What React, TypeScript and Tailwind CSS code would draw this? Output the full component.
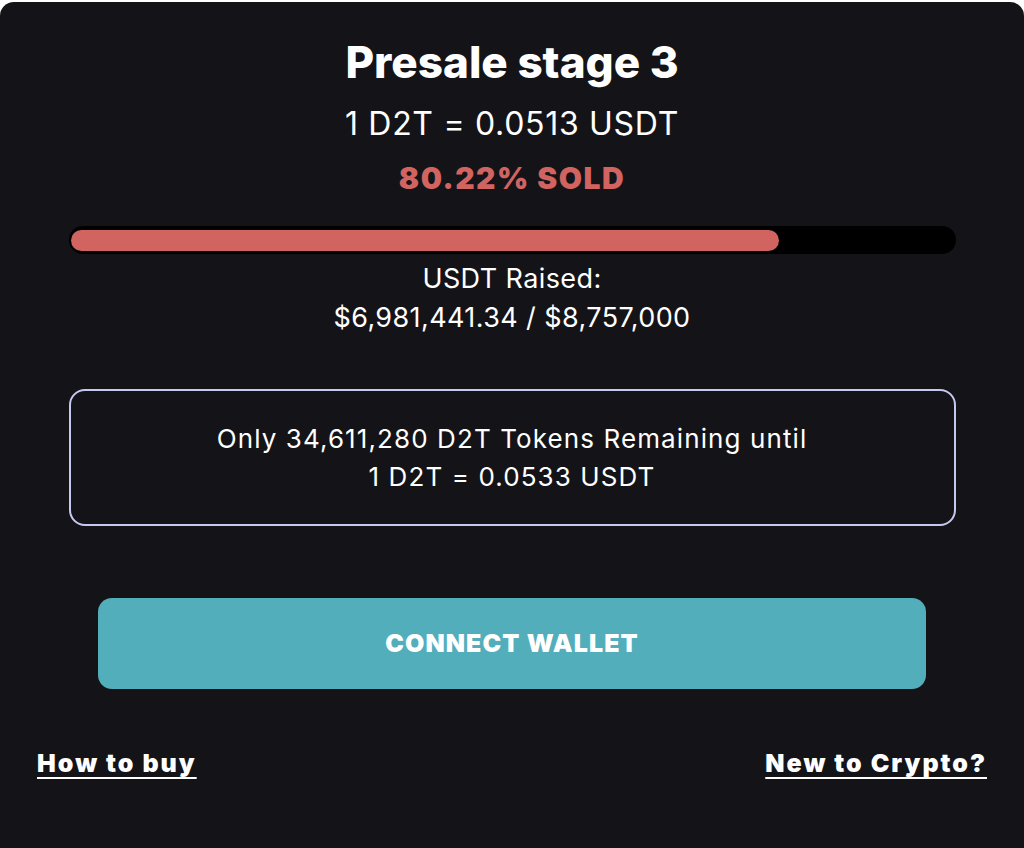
export default function App() {
  return (
    <div className="min-h-[848px] w-[1024px] bg-white pt-[2px]" style={{ fontFamily: "Inter, 'Open Sans', sans-serif" }}>
      <div className="flex min-h-[846px] flex-col items-center rounded-t-[14px] bg-[#141418] text-white">
        <h1 className="mt-[34px] text-[44px] font-extrabold leading-[52px]">Presale stage 3</h1>
        <div className="mt-[18px] text-[32px] leading-[36px] tracking-[0.7px]">1 D2T = 0.0513 USDT</div>
        <div className="mt-[18px] text-[30px] font-black leading-[36px] tracking-[1.5px] text-[#d16460]">80.22% SOLD</div>
        <div className="mt-[30px] h-[28px] w-[887px] rounded-full bg-black px-[2px] py-[3.5px]">
          <div className="h-full w-[80.22%] rounded-full bg-[#d16460]" />
        </div>
        <div className="mt-[5px] text-center text-[27px] leading-[39px] tracking-[0.4px]">
          <div>USDT Raised:</div>
          <div>$6,981,441.34 / $8,757,000</div>
        </div>
        <div className="mt-[52px] flex h-[137px] w-[887px] flex-col items-center justify-center rounded-[16px] border-2 border-[#c6c9ef] text-[26px] leading-[38px] tracking-[1.1px]">
          <div>Only 34,611,280 D2T Tokens Remaining until</div>
          <div>1 D2T = 0.0533 USDT</div>
        </div>
        <button className="mt-[72px] flex h-[91px] w-[828px] items-center justify-center rounded-[14px] bg-[#52aeba] text-[25px] font-black tracking-[1.1px] text-white">
          CONNECT WALLET
        </button>
        <div className="mt-[58px] flex w-full justify-between px-[37px] text-[25px] font-black leading-[32px] tracking-[2px]">
          <a className="underline decoration-[2px] underline-offset-[5px]">How to buy</a>
          <a className="underline decoration-[2px] underline-offset-[5px]">New to Crypto?</a>
        </div>
      </div>
    </div>
  );
}
